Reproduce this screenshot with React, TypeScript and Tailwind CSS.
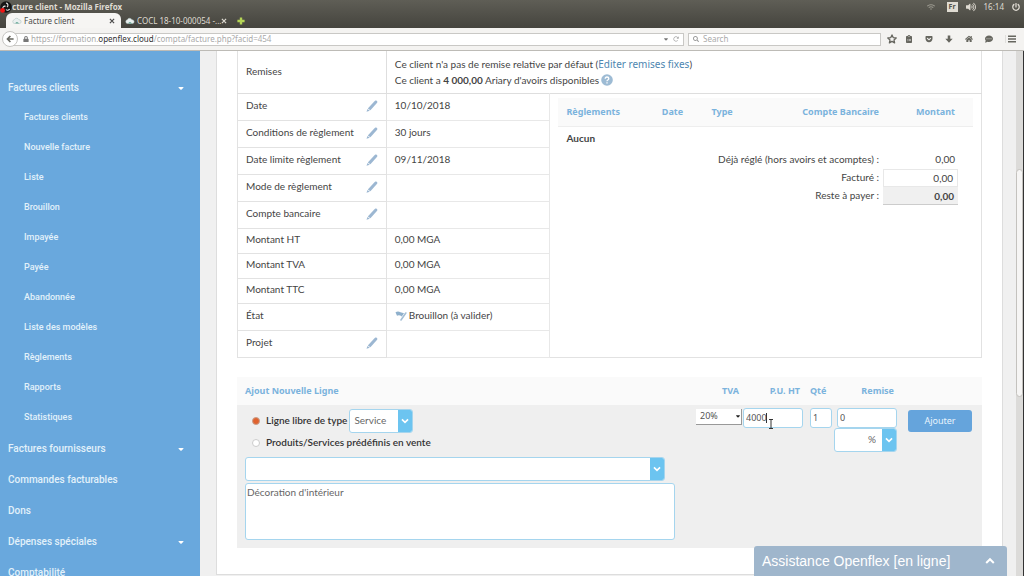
import type { ReactNode } from "react";
import { FaHome, FaLock, FaPowerOff, FaSearch, FaVolumeUp, FaWifi } from "react-icons/fa";
import { FaCaretDown, FaClipboardList, FaCommentDots, FaGetPocket, FaRotateRight } from "react-icons/fa6";
import { clsx } from "clsx";

interface MenuEntry {
  label: string;
  children?: string[];
  hasMenu?: boolean;
}

interface InvoiceRow {
  label: string;
  value?: ReactNode;
  editable?: boolean;
}

interface StrokeIconProps {
  d: string;
  className?: string;
  width?: number;
}

const menu: MenuEntry[] = [
  {
    label: "Factures clients",
    hasMenu: true,
    children: [
      "Factures clients",
      "Nouvelle facture",
      "Liste",
      "Brouillon",
      "Impayée",
      "Payée",
      "Abandonnée",
      "Liste des modèles",
      "Règlements",
      "Rapports",
      "Statistiques",
    ],
  },
  { label: "Factures fournisseurs", hasMenu: true },
  { label: "Commandes facturables" },
  { label: "Dons" },
  { label: "Dépenses spéciales", hasMenu: true },
  { label: "Comptabilité" },
];

const invoiceRows: InvoiceRow[] = [
  { label: "Date", value: "10/10/2018", editable: true },
  { label: "Conditions de règlement", value: "30 jours", editable: true },
  { label: "Date limite règlement", value: "09/11/2018", editable: true },
  { label: "Mode de règlement", editable: true },
  { label: "Compte bancaire", editable: true },
  { label: "Montant HT", value: "0,00 MGA" },
  { label: "Montant TVA", value: "0,00 MGA" },
  { label: "Montant TTC", value: "0,00 MGA" },
  {
    label: "État",
    value: (
      <span className="flex items-center gap-0.5">
        <DraftIcon />
        Brouillon (à valider)
      </span>
    ),
  },
  { label: "Projet", editable: true },
];

// Single-stroke glyph on a 10x10 grid
function StrokeIcon({ d, className, width = 2 }: StrokeIconProps) {
  return (
    <svg viewBox="0 0 10 10" className={className} fill="none" stroke="currentColor" strokeWidth={width} aria-hidden>
      <path d={d} />
    </svg>
  );
}

const paths = {
  back: "M5.5 1.2L1.8 5l3.7 3.8M2 5h7.5",
  close: "M1.5 1.5l7 7M8.5 1.5l-7 7",
  plus: "M5 0.5v9M0.5 5h9",
  chevronDown: "M1.2 3l3.8 3.8L8.8 3",
  chevronUp: "M1.2 7L5 3.2 8.8 7",
  menu: "M0 1.5h10M0 5h10M0 8.5h10",
};

function DraftIcon() {
  return (
    <svg viewBox="0 0 12 10" className="h-2.5 w-3" aria-hidden>
      <path d="M0.5 1.2Q3 -0.3 5.5 1.2L9 2.2L6.8 5.6Q4.2 3.2 2 4.8Z" fill="#8fb0cc" />
      <path d="M10.8 2L6 9" stroke="#a5bfd6" strokeWidth="1.6" strokeLinecap="round" />
    </svg>
  );
}

function PencilIcon() {
  return (
    <svg viewBox="0 0 12 12" className="size-3" fill="#9cb7d2" aria-hidden>
      <path d="M8 1.8L9.4 0.6Q10.6 0.2 11.3 1.4Q11.6 2.2 10.9 3L4.4 10.3L1.8 8.4Z" />
      <path d="M1.5 8.9L3.8 10.7L0.5 11.8Z" />
    </svg>
  );
}

function HelpIcon() {
  return (
    <svg viewBox="0 0 12 12" className="size-3" aria-hidden>
      <circle cx="6" cy="6" r="5.8" fill="#9dbbd4" />
      <path d="M4.2 4.7Q4.2 3 6 3T7.8 4.6Q7.8 5.5 6.8 6Q6 6.4 6 7.3M6 8.3v1.3" fill="none" stroke="#ffffff" strokeWidth="1.3" />
    </svg>
  );
}

function CloudIcon() {
  return (
    <svg viewBox="0 0 10 8" className="h-2 w-2.5 shrink-0" aria-hidden>
      <path d="M2 6.5a2 2 0 0 1 .3-3.8A2.6 2.6 0 0 1 7 2.8a1.9 1.9 0 0 1 .8 3.7z" fill="#e9efef" stroke="#a9bdb9" strokeWidth="0.5" />
      <path d="M3.5 6.5a1.5 1.5 0 0 1 2.8-.8l.9.8z" fill="#6fae9d" />
    </svg>
  );
}

function RecorderIcon() {
  return (
    <svg viewBox="0 0 12 12" className="size-3 shrink-0" aria-hidden>
      <circle cx="6" cy="6" r="5.8" fill="#151515" />
      <path d="M6 2a2.2 2.2 0 0 1 1 4M3 8.5a2.2 2.2 0 0 1 2.6-3.2M9.6 8a2.2 2.2 0 0 1-3.6.5" fill="none" stroke="#e6e6e6" strokeWidth="1.1" />
      <circle cx="2.6" cy="9.4" r="2.4" fill="#f01414" />
    </svg>
  );
}

function StarIcon() {
  return (
    <svg viewBox="0 0 10 10" className="size-2.5" fill="none" stroke="currentColor" strokeWidth="1.3" strokeLinejoin="round" aria-hidden>
      <path d="M5 0.9L6.2 3.6L9.2 3.9L7 5.9L7.6 8.9L5 7.4L2.4 8.9L3 5.9L0.8 3.9L3.8 3.6Z" />
    </svg>
  );
}

function DownloadIcon() {
  return (
    <svg viewBox="0 0 10 10" className="size-2" fill="currentColor" aria-hidden>
      <path d="M3.4 0.5h3.2v4.2h3L5 9.6L0.4 4.7h3z" />
    </svg>
  );
}

function Browser() {
  return (
    <header className="shrink-0 font-['Noto_Sans'] text-[8px]">
      <div className="bg-linear-to-b from-[#5f5e56] to-[#45443e]">
        <div className="flex h-[13px] items-center text-[#dfdbd2]">
          <RecorderIcon />
          <h1 className="flex-1 font-bold">cture client - Mozilla Firefox</h1>
          <div className="flex items-center gap-2 pr-1">
            <FaWifi className="size-2 text-[#99978d]" />
            <span className="ml-1 bg-[#dfdbd2] px-0.5 text-[7px] font-bold leading-[10px] text-[#55534b]">Fr</span>
            <FaVolumeUp className="size-2.5" />
            <span>16:14</span>
            <FaPowerOff className="size-2" />
          </div>
        </div>
        <div className="flex h-[15px] items-end">
          <div className="ml-1.5 flex h-[15px] w-[115px] items-center rounded-t-md bg-[#f6f5f3] pr-1.5 pl-1.5 text-[#4c4c4c]">
            <CloudIcon />
            <span className="ml-0.5 flex-1">Facture client</span>
            <button type="button" aria-label="Fermer l'onglet">
              <StrokeIcon d={paths.close} className="size-1.5" />
            </button>
          </div>
          <div className="flex h-[15px] w-[108px] items-center pr-1 pl-1 text-[#dfdbd2]">
            <CloudIcon />
            <span className="ml-0.5 flex-1 whitespace-nowrap">COCL 18-10-000054 -...</span>
            <button type="button" aria-label="Fermer l'onglet">
              <StrokeIcon d={paths.close} className="size-1.5" />
            </button>
          </div>
          <button type="button" aria-label="Nouvel onglet" className="flex h-[15px] items-center pl-2 text-[#b4d455]">
            <StrokeIcon d={paths.plus} className="size-2" width={3} />
          </button>
        </div>
      </div>
      <div className="flex h-[23px] items-center border-b border-[#bdbbb6] bg-[#f4f3f1] pr-2 pl-0.5 text-[#66665f]">
        <button type="button" aria-label="Retour" className="z-10 flex size-4 shrink-0 items-center justify-center rounded-full border border-[#c6c5c2] bg-white">
          <StrokeIcon d={paths.back} className="size-2" />
        </button>
        <div className="-ml-1 flex h-[13px] flex-1 items-center border border-[#c9c8c5] bg-white pr-1 pl-2 text-[#aaaaaa]">
          <FaLock className="mr-0.5 size-1.5 text-[#777777]" />
          <span className="flex-1">
            https://formation.<span className="text-[#333333]">openflex.cloud</span>/compta/facture.php?facid=454
          </span>
          <FaCaretDown className="mr-1 size-1.5 text-[#777777]" />
          <FaRotateRight className="size-1.5" />
        </div>
        <label className="ml-1 flex h-[13px] w-[193px] items-center gap-1 border border-[#c9c8c5] bg-white px-1">
          <FaSearch className="size-1.5 text-[#999999]" />
          <input aria-label="Search" placeholder="Search" className="min-w-0 flex-1 placeholder:text-[#aaaaaa]" />
        </label>
        <nav className="ml-1.5 flex items-center gap-3">
          <span className="flex items-center gap-2">
            <StarIcon />
            <FaClipboardList className="size-2" />
          </span>
          <FaGetPocket className="size-2" />
          <DownloadIcon />
          <FaHome className="size-2" />
          <FaCommentDots className="size-2" />
          <span className="border-l border-[#e0dfdc] pl-0.5">
            <StrokeIcon d={paths.menu} className="size-2" />
          </span>
        </nav>
      </div>
    </header>
  );
}

function Sidebar() {
  return (
    <nav className="w-[200px] shrink-0 overflow-hidden bg-[#69a8dd] pt-[21px] font-['Roboto'] font-medium text-[#e2f1fa]">
      <ul>
        {menu.map((entry) => (
          <li key={entry.label}>
            <a href="#" className="flex h-[31px] items-center justify-between pr-[15px] pl-2 text-[10px]">
              {entry.label}
              {entry.hasMenu && <FaCaretDown className="size-2 text-white" />}
            </a>
            {entry.children && (
              <ul>
                {entry.children.map((child) => (
                  <li key={child}>
                    <a href="#" className="flex h-[30px] items-center pl-6 text-[9px]">
                      {child}
                    </a>
                  </li>
                ))}
              </ul>
            )}
          </li>
        ))}
      </ul>
    </nav>
  );
}

function Payments() {
  return (
    <table className="w-full table-fixed">
      <colgroup>
        <col className="w-[23%]" />
        <col className="w-[12%]" />
        <col />
        <col className="w-[26%]" />
        <col className="w-[90px]" />
      </colgroup>
      <thead>
        <tr className="h-[29px] border-b border-[#eeeeee] bg-[#fafafa] text-left font-['Noto_Sans'] text-[9px] text-[#7bb3dd]">
          <th className="px-2 font-bold">Règlements</th>
          <th className="px-2 font-bold">Date</th>
          <th className="px-2 font-bold">Type</th>
          <th className="pr-1 text-right font-bold whitespace-nowrap">Compte Bancaire</th>
          <th className="pr-[18px] text-right font-bold">Montant</th>
        </tr>
      </thead>
      <tbody>
        <tr className="h-6">
          <td colSpan={5} className="px-2 font-bold">Aucun</td>
        </tr>
        <tr className="h-[18px]">
          <td colSpan={4} className="pr-1 text-right">Déjà réglé (hors avoirs et acomptes) :</td>
          <td className="pr-[18px] text-right">0,00</td>
        </tr>
        <tr className="h-[18px]">
          <td colSpan={4} className="pr-1 text-right">Facturé :</td>
          <td className="pr-[15px]">
            <div className="h-[18px] border border-[#e8e8e8] px-1 text-right leading-4">0,00</div>
          </td>
        </tr>
        <tr className="h-[18px]">
          <td colSpan={4} className="pr-1 text-right">Reste à payer :</td>
          <td className="pr-[15px]">
            <div className="h-[18px] border-b border-[#cccccc] bg-[#f0f0f0] px-1 text-right font-bold leading-[18px]">0,00</div>
          </td>
        </tr>
      </tbody>
    </table>
  );
}

function InvoiceDetails() {
  return (
    <table className="w-full table-fixed border-x border-b border-[#e2e2e2] text-[#444444]">
      <colgroup>
        <col className="w-[20%]" />
        <col className="w-[22%]" />
        <col />
      </colgroup>
      <tbody>
        <tr className="h-[42px] border-b border-[#dedede]">
          <td className="border-r border-[#dedede] px-2">Remises</td>
          <td colSpan={2} className="px-2 leading-4">
            <p>
              Ce client n'a pas de remise relative par défaut (
              <a href="#" className="font-['Noto_Sans'] text-[#4d86b0]">Editer remises fixes</a>)
            </p>
            <p className="flex items-center gap-0.5">
              <span>
                Ce client a <b>4 000,00</b> Ariary d'avoirs disponibles
              </span>
              <HelpIcon />
            </p>
          </td>
        </tr>
        {invoiceRows.map((row, index) => (
          <tr key={row.label} className={row.label.startsWith("Montant") ? "h-[25px]" : "h-[27px]"}>
            <td className="border-r border-b border-[#e2e2e2] px-2 pb-0.5">
              <div className="flex items-center justify-between whitespace-nowrap">
                {row.label}
                {row.editable && (
                  <button type="button" aria-label={`Modifier ${row.label}`}>
                    <PencilIcon />
                  </button>
                )}
              </div>
            </td>
            <td className="border-r border-b border-[#e8e8e8] px-2 pb-0.5">{row.value}</td>
            {index === 0 && (
              <td rowSpan={invoiceRows.length} className="px-2 pt-1 align-top">
                <Payments />
              </td>
            )}
          </tr>
        ))}
      </tbody>
    </table>
  );
}

interface BlueSelectProps {
  label: string;
  options: string[];
  className?: string;
  alignRight?: boolean;
}

function BlueSelect({ label, options, className, alignRight }: BlueSelectProps) {
  return (
    <div className={clsx("flex h-6 overflow-hidden rounded-[3px] border border-[#a5d5ee] bg-white", className)}>
      <select
        aria-label={label}
        className={clsx("min-w-0 flex-1 appearance-none text-[10px] text-[#666666]", alignRight ? "pr-1.5 text-right" : "pl-1")}
      >
        {options.map((option) => (
          <option key={option}>{option}</option>
        ))}
      </select>
      <span className="flex w-3.5 items-center justify-center bg-[#6cc4f0] text-white">
        <StrokeIcon d={paths.chevronDown} className="size-2" />
      </span>
    </div>
  );
}

const fieldClass = "h-5 rounded-[3px] border border-[#a5d5ee] bg-white px-0.5 font-['Noto_Sans'] text-[9px] text-[#555555]";

function NewLineForm() {
  return (
    <table className="mt-[19px] w-full table-fixed">
      <colgroup>
        <col />
        <col className="w-[51px]" />
        <col className="w-[67px]" />
        <col className="w-6" />
        <col className="w-[66px]" />
        <col className="w-[82px]" />
      </colgroup>
      <thead>
        <tr className="h-7 bg-[#fafafa] font-['Noto_Sans'] text-[9px] text-[#7bb3dd]">
          <th className="px-2 text-left font-bold">Ajout Nouvelle Ligne</th>
          <th className="pr-1 text-right font-bold">TVA</th>
          <th className="pr-2.5 text-right font-bold">P.U. HT</th>
          <th className="text-left font-bold">Qté</th>
          <th className="pr-1.5 text-right font-bold">Remise</th>
          <th />
        </tr>
      </thead>
      <tbody>
        <tr className="bg-[#efefef] align-top">
          <td className="px-2 pt-1 pb-2 font-semibold text-[#333333]">
            <div className="flex h-6 items-center">
              <label className="flex items-center gap-1.5 pr-1.5 pl-[7px]">
                <input
                  type="radio"
                  name="line-type"
                  defaultChecked
                  className="size-2 appearance-none rounded-full border border-[#c9a08c] bg-white checked:bg-[#e0622e]"
                />
                Ligne libre de type
              </label>
              <BlueSelect label="Type de ligne" options={["Service", "Produit"]} className="-ml-1 w-16 font-normal" />
            </div>
            <label className="flex h-5 items-center gap-1.5 pl-[7px]">
              <input type="radio" name="line-type" className="size-2 appearance-none rounded-full border border-[#cccccc] bg-white" />
              Produits/Services prédéfinis en vente
            </label>
            <BlueSelect label="Produit" options={[""]} className="mt-1 w-[420px] font-normal" />
            <textarea
              aria-label="Description"
              defaultValue="Décoration d'intérieur"
              className="mt-0.5 block h-[57px] w-[430px] resize-none rounded-[3px] border border-[#a5d5ee] bg-white px-px leading-4 font-normal text-[#666666]"
            />
          </td>
          <td className="pt-1 pl-1">
            <div className="flex h-4 w-[46px] items-center border-r border-b border-[#999999] bg-white">
              <select aria-label="TVA" className="min-w-0 flex-1 appearance-none pl-1 font-['Noto_Sans'] text-[9px] text-[#555555]">
                <option>20%</option>
              </select>
              <FaCaretDown className="size-1.5 text-[#222222]" />
            </div>
          </td>
          <td className="relative pt-[3px]">
            <input aria-label="P.U. HT" defaultValue="4000" className={clsx(fieldClass, "w-[60px]")} />
            <svg viewBox="0 0 6 10" className="absolute top-3.5 left-[25px] h-2.5 w-1.5" aria-hidden>
              <path d="M1 0.5h4M3 0.5v9M1 9.5h4" stroke="#333333" strokeWidth="1" fill="none" />
            </svg>
            <span className="absolute top-2 left-[23px] h-2.5 w-px bg-[#333333]" />
          </td>
          <td className="pt-[3px]">
            <input aria-label="Qté" defaultValue="1" className={clsx(fieldClass, "w-[22px]")} />
          </td>
          <td className="pt-[3px]">
            <div className="flex w-[63px] flex-col items-end">
              <input aria-label="Remise" defaultValue="0" className={clsx(fieldClass, "w-[60px]")} />
              <BlueSelect label="Type de remise" options={["%"]} className="w-full" alignRight />
            </div>
          </td>
          <td className="pt-[5px] pl-2">
            <button type="button" className="h-[22px] w-16 rounded-[3px] bg-[#65a4dc] font-['Noto_Sans'] text-[9px] text-[#e9f4fc]">
              Ajouter
            </button>
          </td>
        </tr>
      </tbody>
    </table>
  );
}

export default function App() {
  return (
    <div className="flex h-screen flex-col overflow-hidden bg-[#f0f0f0]">
      <Browser />
      <div className="flex min-h-0 flex-1">
        <Sidebar />
        <main className="min-w-0 flex-1 overflow-hidden pr-[13px] pl-4">
          <section className="border-x border-b border-[#dddddd] bg-white px-5 pb-[26px] font-['Lato'] text-[10px]">
            <InvoiceDetails />
            <NewLineForm />
          </section>
        </main>
        <div className="flex w-2 flex-col border-r border-[#333333] bg-[#dcdbd9]" aria-hidden>
          <div className="h-[118px]" />
          <div className="h-[228px] rounded-full border border-[#c4c2be] bg-[#f6f5f4]" />
        </div>
      </div>
      <button
        type="button"
        className="fixed right-[17px] bottom-0 flex h-[30px] w-[253px] items-center justify-between rounded-t-[3px] bg-[#9fb6cc] pr-3 pl-2 font-['Liberation_Sans'] text-[14px] text-white"
      >
        Assistance Openflex [en ligne]
        <StrokeIcon d={paths.chevronUp} className="size-2.5" />
      </button>
    </div>
  );
}
